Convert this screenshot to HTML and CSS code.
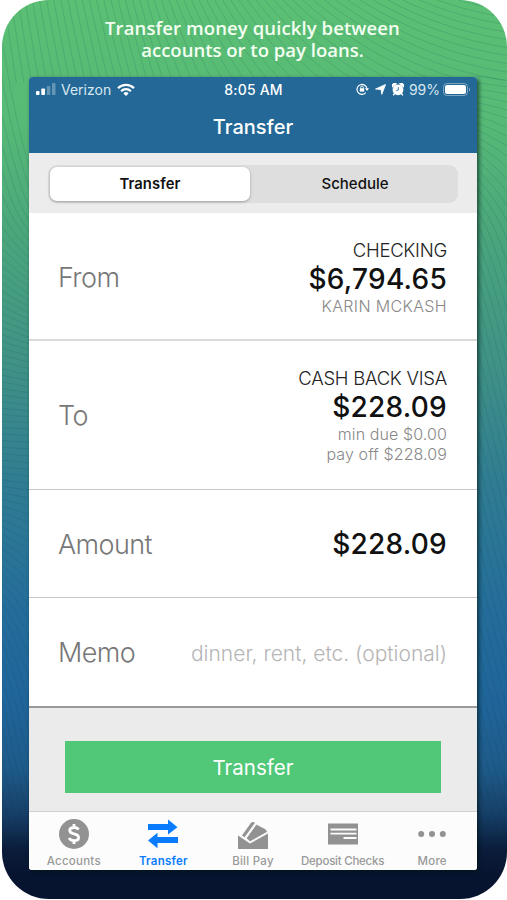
FILE: index.html
```html
<!DOCTYPE html>
<html lang="en">
<head>
  <meta charset="UTF-8" />
  <meta name="viewport" content="width=device-width, initial-scale=1.0"/>
  <title>Transfer</title>
  <link rel="stylesheet" href="styles.css">
</head>
<body>
  <div class="promo">
    <svg class="waves" id="waves" width="505" height="899"></svg>
    <h1 class="promo-title">
      <span class="line-one">Transfer money quickly between</span>
      <span>accounts or to pay loans.</span>
    </h1>
    <div class="phone">
      <header class="header">
        <div class="status">
          <div class="status-left">
            <svg width="20" height="12" viewBox="0 0 20 12" fill="#fff">
              <rect x="0" y="8" width="3.5" height="4" rx=".8"/>
              <rect x="5.3" y="5.5" width="3.7" height="6.5" rx=".8"/>
              <rect x="10.8" y="3" width="3.5" height="9" rx=".8" opacity=".3"/>
              <rect x="16" y="0" width="3.5" height="12" rx=".8" opacity=".3"/>
            </svg>
            <span class="carrier">Verizon</span>
            <svg width="18" height="13" viewBox="0 0 18 13" fill="none" stroke="#fff" stroke-width="2.2">
              <path d="M1 5.1a11.3 11.3 0 0 1 16 0"/>
              <path d="M4.1 8.2a6.9 6.9 0 0 1 9.8 0"/>
              <path d="M9 13 6.4 10.4a3.7 3.7 0 0 1 5.2 0z" fill="#fff" stroke="none"/>
            </svg>
          </div>
          <div class="clock">8:05 AM</div>
          <div class="status-right">
            <svg width="13" height="12" viewBox="0 0 13 12" fill="none" stroke="#fff">
              <path d="M9.8 9.7A5 5 0 1 1 11 6" stroke-width="1.2"/>
              <path d="M9 5.3h4L11 8z" fill="#fff" stroke="none"/>
              <rect x="3.8" y="5.2" width="4.4" height="3.4" fill="#fff" stroke="none"/>
              <path d="M4.7 5.4V4.3a1.3 1.3 0 0 1 2.6 0v1.1" stroke-width=".9"/>
            </svg>
            <svg class="arrow" width="11" height="11" viewBox="0 0 11 11" fill="#fff" stroke="#fff" stroke-width=".8" stroke-linejoin="round"><path d="M10.6.4 6.8 10.4 6 5.6.5 5z"/></svg>
            <svg class="alarm" width="12" height="13" viewBox="0 0 12 13">
              <path d="M.4 3.6A2.5 2.5 0 0 1 4 .8zM11.6 3.6A2.5 2.5 0 0 0 8 .8zM1.2 12.3l2-2.5M10.8 12.3l-2-2.5" fill="#fff" stroke="#fff" stroke-width="1.4"/>
              <circle cx="6" cy="6.8" r="5.4" fill="#fff"/>
              <path d="M6.3 4.2V7L4.3 7.8" fill="none" stroke="#236896" stroke-width=".9"/>
            </svg>
            <span class="percent">99%</span>
            <svg width="28" height="13" viewBox="0 0 28 13">
              <rect x=".5" y=".5" width="24" height="12" rx="3.4" fill="none" stroke="#fff" opacity=".4"/>
              <rect x="2" y="2" width="21" height="9" rx="2" fill="#fff"/>
              <path d="M26 4.5c1.7.7 1.7 3.3 0 4z" fill="#fff" opacity=".4"/>
            </svg>
          </div>
        </div>
        <div class="header-title">Transfer</div>
      </header>

      <div class="segment-bar">
        <div class="segment">
          <div class="segment-item active">Transfer</div>
          <div class="segment-item">Schedule</div>
        </div>
      </div>

      <div class="row row-from">
        <div class="label">From</div>
        <div class="value">
          <div class="account">CHECKING</div>
          <div class="money">$6,794.65</div>
          <div class="sub owner">KARIN MCKASH</div>
        </div>
      </div>
      <div class="row row-to">
        <div class="label">To</div>
        <div class="value">
          <div class="account">CASH BACK VISA</div>
          <div class="money">$228.09</div>
          <div class="sub">min due $0.00</div>
          <div class="sub">pay off $228.09</div>
        </div>
      </div>
      <div class="row row-amount">
        <div class="label">Amount</div>
        <div class="money">$228.09</div>
      </div>
      <div class="row row-memo">
        <div class="label">Memo</div>
        <div class="memo">dinner, rent, etc. (optional)</div>
      </div>

      <div class="submit"><button>Transfer</button></div>

      <nav class="tabs">
        <div class="tab">
          <svg width="32" height="32" viewBox="0 0 32 32">
            <circle cx="16" cy="16" r="15" fill="#929292"/>
            <path d="M20.5 11.7c-.8-1.5-2.4-2.2-4.5-2.2-2.6 0-4.3 1.2-4.3 3.1 0 2.1 1.9 2.8 4.3 3.3 2.7.6 4.6 1.5 4.6 3.5 0 2-1.8 3.2-4.6 3.2-2.3 0-4.1-.9-4.9-2.6M16 6v4M16 22v4" fill="none" stroke="#fff" stroke-width="2.8"/>
          </svg>
          <span>Accounts</span>
        </div>
        <div class="tab current">
          <svg width="32" height="32" viewBox="0 0 32 32" fill="#087bfe">
            <path d="M1 6h20V1.5l9.5 7.7-9.5 7.3V12H1zM31 19H10.5v-4.2L1 22.6l9.5 7.7V25H31z"/>
          </svg>
          <span>Transfer</span>
        </div>
        <div class="tab">
          <svg width="32" height="32" viewBox="0 0 32 32" fill="#929292">
            <path d="M1 17.5 13 25.5 31 15.5V31H1z"/>
            <path d="M5 17.4 14.2 4.6Q15.2 3.6 16.4 4L18 4.8 7.6 19.2z"/>
            <path d="M9.2 20.2 18.6 7.2Q19.4 6.2 20.6 6.8L29 11.2 30.5 14 13 23.8z" stroke="#fcfcfc" stroke-width=".8"/>
          </svg>
          <span>Bill Pay</span>
        </div>
        <div class="tab">
          <svg width="32" height="32" viewBox="0 0 32 32">
            <path d="M1 5.5h30v21H1z" fill="#929292"/>
            <path d="M3.5 11.5h26M3.5 15.6h26M16.5 20h13" stroke="#fcfcfc" stroke-width="1.8"/>
          </svg>
          <span class="deposit">Deposit Checks</span>
        </div>
        <div class="tab">
          <svg width="32" height="32" viewBox="0 0 32 32" fill="#929292">
            <circle cx="5.2" cy="16" r="3"/><circle cx="16" cy="16" r="3"/><circle cx="26.8" cy="16" r="3"/>
          </svg>
          <span>More</span>
        </div>
      </nav>
    </div>
  </div>
  <script src="waves.js"></script>
</body>
</html>
```
FILE: styles.css
```css
* { box-sizing: border-box; }
body { margin: 0; background: #fff; font-family: Inter, "Liberation Sans", sans-serif; }
svg { display: block; flex: none; }

.promo {
  position: relative;
  height: 899px;
  margin-left: 2px;
  border-radius: 47px;
  overflow: hidden;
  background: linear-gradient(#5bbf74 0, #57ba76 120px, #4aa57c 240px, #3f9186 370px, #307d92 480px, #246d9a 610px, #20659a 700px, #1e5a88 770px, #163e66 815px, #0a1c3a 850px, #071430 875px, #071430);
}
.waves { position: absolute; left: 0; top: 0; fill: none; stroke: #064055; stroke-opacity: .13; stroke-width: 1; }

.promo-title { position: relative; height: 77px; margin: 0; padding: 17px 4px 0 0; text-align: center; color: #f4fff2; font: 600 18.5px/22px "Open Sans", sans-serif; }
.promo-title span { display: block; height: 22px; }
.promo-title .line-one { letter-spacing: .1px; }

.phone { position: relative; width: 448px; height: 793px; margin-left: 27px; border-radius: 3px; overflow: hidden; background: #fff; box-shadow: 2px 2px 4px rgba(0, 20, 20, .65); display: flex; flex-direction: column; }

.header { height: 76px; background: #236896; color: #fff; }
.status { height: 24px; display: grid; grid-template-columns: 1fr auto 1fr; align-items: center; padding: 0 6px 0 7px; font-size: 14px; }
.status-left, .status-right { display: flex; align-items: center; color: #d8e8f2; }
.status-right { justify-content: flex-end; }
.carrier { margin: 0 6px 0 5px; }
.clock { font-weight: 500; font-size: 14px; letter-spacing: .2px; }
.arrow { margin-left: 6px; }
.alarm { margin: 0 5px 0 6px; }
.percent { margin-right: 3px; }
.header-title { text-align: center; font-size: 20px; font-weight: 500; line-height: 24px; padding-top: 14px; }

.segment-bar { height: 60px; padding: 12px 19px 10px; background: #ececed; }
.segment { height: 38px; padding: 2px 2px 2px; border-radius: 9px; background: #dededf; display: flex; }
.segment-item { flex: 1; display: flex; align-items: center; justify-content: center; font-size: 15px; font-weight: 500; color: #111; padding: 0 0 2px 4px; }
.segment-item.active { flex: 0 0 200px; padding: 0 0 1px; background: #fff; border-radius: 7px; font-size: 14.8px; font-weight: 600; letter-spacing: .1px; box-shadow: 0 1px 3px rgba(0, 0, 0, .3); }

.row { display: flex; align-items: center; justify-content: space-between; padding: 0 30px; border-bottom: 1px solid #c9c9cb; }
.row-from { height: 128px; padding-top: 2px; border-bottom: 2px solid #d9d9d9; }
.row-to { height: 149px; }
.row-amount { height: 108px; padding-top: 1px; }
.row-memo { height: 110px; border-bottom: 2px solid #9a9a9a; }
.label { font-size: 27px; font-weight: 300; color: #777; letter-spacing: -.6px; margin-left: -1px; padding-top: 1px; }
.value { text-align: right; }
.account { font-size: 18.5px; line-height: 24px; font-weight: 300; color: #222; letter-spacing: -.25px; }
.money { font-size: 28px; line-height: 34px; font-weight: 500; color: #111; letter-spacing: .25px; }
.sub { font-size: 16px; line-height: 20px; font-weight: 300; color: #888; letter-spacing: .1px; }
.owner { letter-spacing: .35px; }
.memo { font-size: 21px; font-weight: 300; color: #b5b5b5; padding-top: 2px; }

.submit { height: 103px; padding: 33px 36px 0; background: #ebebeb; }
.submit button { display: block; width: 100%; height: 52px; border: 0; padding: 0; background: #50c878; color: #fff; font: 400 20.5px Inter, sans-serif; }

.tabs { flex: 1; display: flex; border-top: 1px solid #cfcfcf; background: #fcfcfc; }
.tab { flex: 0 0 89.6px; display: flex; flex-direction: column; align-items: center; padding-top: 6px; font-size: 11.5px; font-weight: 500; color: #999; white-space: nowrap; }
.tab span { margin-top: 4px; line-height: 14px; letter-spacing: .25px; }
.tab .deposit { letter-spacing: -.25px; }
.tab.current { color: #087bfe; font-weight: 600; }
```
FILE: waves.js
```js
const waves = document.getElementById("waves");
let d = "";

// linear interpolation over [position, degrees] stops
function angleAt(stops, p) {
  if (p <= stops[0][0]) return stops[0][1];
  for (let i = 1; i < stops.length; i++) {
    const [a, from] = stops[i - 1], [b, to] = stops[i];
    if (p < b) return from + (to - from) * (p - a) / (b - a);
  }
  return stops[stops.length - 1][1];
}

function trace(x, y, maxX, maxY, field) {
  d += `M${x.toFixed(1)} ${y.toFixed(1)}`;
  while (x < maxX && y < maxY) {
    const t = field(x, y) * Math.PI / 180;
    x += 4 * Math.cos(t);
    y += 4 * Math.sin(t);
    d += `L${x.toFixed(1)} ${y.toFixed(1)}`;
  }
}

// area above the phone
function drawTop() {
  const stops = [[0, 82], [150, 74], [230, 58], [320, 38], [420, 22], [505, 8]];
  for (let x = 2; x < 505; x += 7 / Math.sin(angleAt(stops, x) * Math.PI / 180)) {
    trace(x, 0, 505, 80, px => angleAt(stops, px));
  }
}

// strips at the sides of the phone
function drawStrip(x0, x1, y0, stops) {
  for (let y = y0; y < 830; y += 6.5 / Math.cos(angleAt(stops, y) * Math.PI / 180)) {
    trace(x0, y, x1, 850, (px, py) => angleAt(stops, py));
  }
}

drawTop();
drawStrip(0, 28, 40, [[80, 80], [190, 72], [250, 45], [330, 20], [430, 2], [490, 8], [560, 40], [640, 68], [720, 78]]);
drawStrip(474, 505, 76, [[90, 8], [120, 20], [170, 45], [240, 70], [330, 76]]);

const path = document.createElementNS("http://www.w3.org/2000/svg", "path");
path.setAttribute("d", d);
waves.appendChild(path);
```
